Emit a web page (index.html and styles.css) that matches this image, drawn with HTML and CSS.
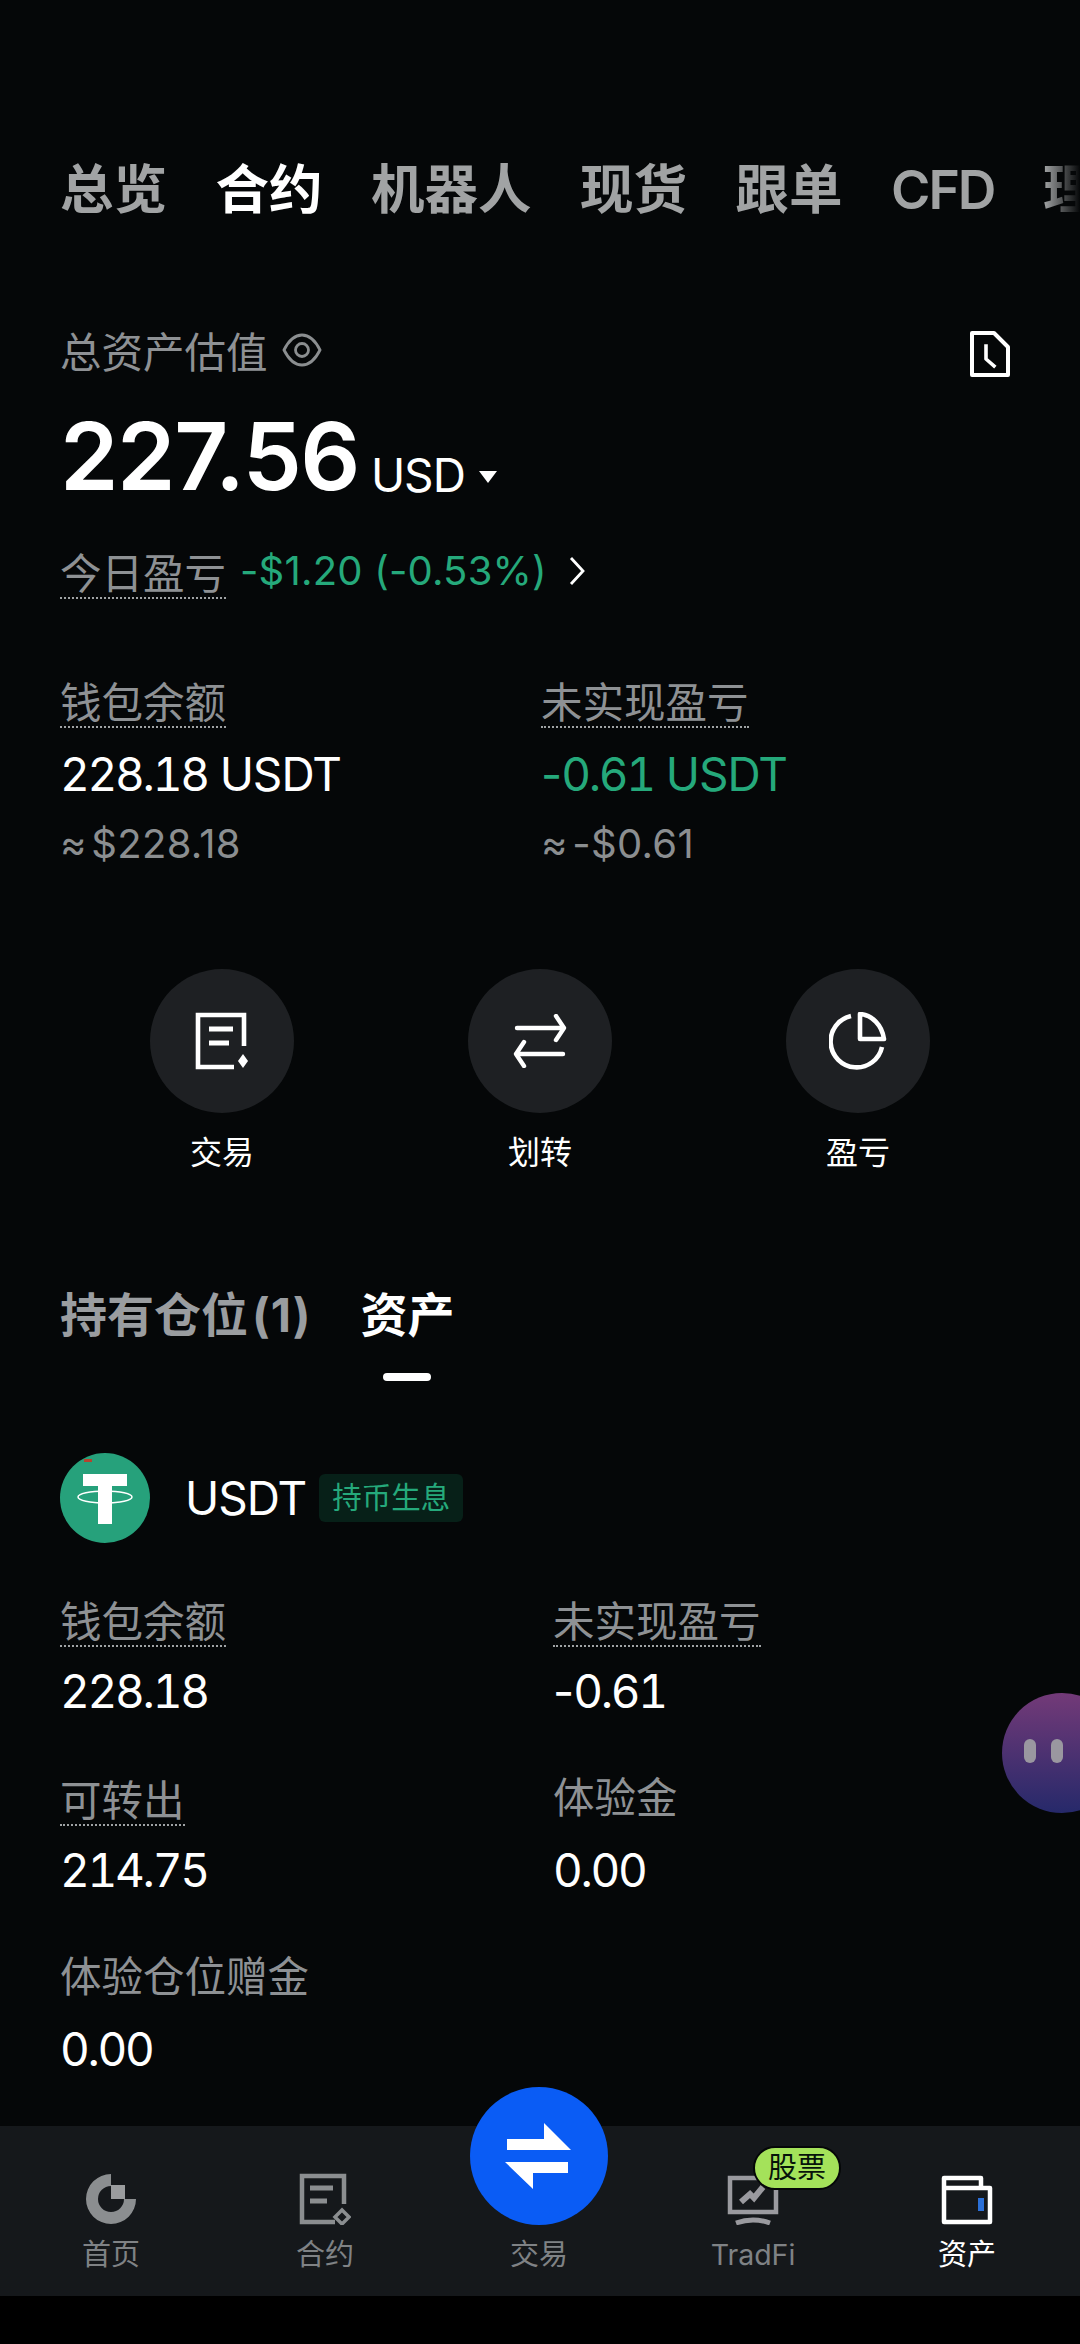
FILE: index.html
```html
<!DOCTYPE html>
<html lang="zh-CN">
<head>
    <meta charset="UTF-8">
    <meta name="viewport" content="width=device-width, initial-scale=1.0">
    <title>资产</title>
    <link rel="stylesheet" href="styles.css">
</head>
<body>
    <div class="page">
        <main class="content">
            <div class="top-tabs">
                <span>总览</span>
                <span class="active">合约</span>
                <span>机器人</span>
                <span>现货</span>
                <span>跟单</span>
                <span class="latin-tab">CFD</span>
                <span>理财</span>
            </div>

            <div class="total-head">
                <span>总资产估值</span>
                <svg class="eye" viewBox="0 0 40 40" fill="none" stroke="#8b8e90" stroke-width="2.8">
                    <path d="M2 20C7 10 13 5 20 5s13 5 18 15c-5 10-11 15-18 15S7 30 2 20z"/>
                    <circle cx="20" cy="20" r="6.500"/>
                </svg>
                <svg class="history" viewBox="0 0 40 46" fill="none" stroke="#fff" stroke-width="4" stroke-linejoin="round">
                    <path d="M2 2h22l14 14v28H2z"/>
                    <path d="M16 15v13l8 7" stroke-linecap="square" stroke-width="3.6"/>
                </svg>
            </div>
            <div class="total-value">
                <span class="big">227.56</span>
                <span class="unit">USD</span>
                <span class="caret"></span>
            </div>
            <div class="today">
                <span class="hint">今日盈亏</span>
                <span class="green">-$1.20 (-0.53%)</span>
                <svg class="chevron" viewBox="0 0 18 30" fill="none" stroke="#fff" stroke-width="2.8">
                    <path d="M3 2l12 13L3 28"/>
                </svg>
            </div>

            <div class="balance">
                <div>
                    <div class="hint">钱包余额</div>
                    <div class="value"><span class="num">228.18</span> USDT</div>
                    <div class="approx">≈ $228.18</div>
                </div>
                <div>
                    <div class="hint">未实现盈亏</div>
                    <div class="value green">-<span class="num">0.61</span> USDT</div>
                    <div class="approx">≈ -$0.61</div>
                </div>
            </div>

            <div class="actions">
                <div class="action">
                    <div class="circle">
                        <svg width="54" height="58" viewBox="0 0 54 58" fill="none" stroke="#fff" stroke-width="4.600">
                            <path d="M49 34V3H3v52h36"/>
                            <path d="M14 17h24M14 31h20" stroke-width="5"/>
                            <path d="M48 42l5 7-5 7-5-7z" fill="#fff" stroke="none"/>
                        </svg>
                    </div>
                    <span>交易</span>
                </div>
                <div class="action">
                    <div class="circle">
                        <svg width="56" height="54" viewBox="0 0 56 54" fill="none" stroke="#fff" stroke-width="4.400" stroke-linecap="round" stroke-linejoin="round">
                            <path d="M5 14h47M44 2l8 12-8 12"/>
                            <path d="M51 40H4M12 28L4 40l8 12"/>
                        </svg>
                    </div>
                    <span>划转</span>
                </div>
                <div class="action">
                    <div class="circle">
                        <svg width="58" height="58" viewBox="0 0 58 58" fill="none" stroke="#fff" stroke-width="4.600">
                            <path d="M22 4A26 26 0 1 0 53 35"/>
                            <path d="M31 2c12 1 22 11 24 25H31z" stroke-linejoin="round"/>
                        </svg>
                    </div>
                    <span>盈亏</span>
                </div>
            </div>

            <div class="sub-tabs">
                <span>持有仓位<span class="count">(1)</span></span>
                <span class="active">资产</span>
            </div>

            <div class="coin">
                <svg class="coin-logo" viewBox="0 0 90 90">
                    <circle cx="45" cy="45" r="45" fill="#26a17b"/>
                    <path d="M23 21h44v12H52v38H38V33H23z" fill="#fff"/>
                    <ellipse cx="45" cy="44" rx="27" ry="6" fill="none" stroke="#fff" stroke-width="1.500"/>
                    <path d="M24 6h8v3h-8z" fill="#b5432f"/>
                </svg>
                <span class="coin-name">USDT</span>
                <span class="coin-tag">持币生息</span>
            </div>

            <div class="coin-grid">
                <div>
                    <div class="hint">钱包余额</div>
                    <div class="value"><span class="num">228.18</span></div>
                </div>
                <div>
                    <div class="hint">未实现盈亏</div>
                    <div class="value">-<span class="num">0.61</span></div>
                </div>
                <div>
                    <div class="hint">可转出</div>
                    <div class="value"><span class="num">214.75</span></div>
                </div>
                <div>
                    <div class="label">体验金</div>
                    <div class="value"><span class="num">0.00</span></div>
                </div>
                <div>
                    <div class="label">体验仓位赠金</div>
                    <div class="value"><span class="num">0.00</span></div>
                </div>
            </div>
        </main>

        <nav class="bottom-nav">
            <div class="nav-item">
                <svg viewBox="0 0 50 52" width="50" height="52">
                    <path d="M25 1v12a13 13 0 1 0 13 13h12A25 25 0 1 1 25 1z" fill="#8b8e90"/>
                    <path d="M25 12h14v14H25z" fill="#9a9c9e"/>
                </svg>
                <span>首页</span>
            </div>
            <div class="nav-item">
                <svg viewBox="0 0 52 52" width="52" height="52" fill="none" stroke="#8b8e90" stroke-width="4.500">
                    <path d="M45 31V3H3v46h33"/>
                    <path d="M11 15h23M11 28h17" stroke-width="5"/>
                    <path d="M43 37l7 7-7 7-7-7z" stroke-width="3.500"/>
                </svg>
                <span>合约</span>
            </div>
            <div class="nav-item">
                <div class="trade-btn">
                    <svg width="72" height="70" viewBox="0 0 72 70" fill="#fff">
                        <path d="M4 18h37V2l27 27H4z"/>
                        <path d="M2 41h63v11H30v16z"/>
                    </svg>
                </div>
                <span>交易</span>
            </div>
            <div class="nav-item">
                <svg viewBox="0 0 52 50" width="52" height="50" fill="none" stroke="#9a9a9f" stroke-width="4.500">
                    <path d="M3 3h46v34H3z"/>
                    <path d="M14 27l9-8 4 4 9-11" stroke-width="6"/>
                    <path d="M9 48c11-4 23-4 34 0" stroke-width="5"/>
                </svg>
                <span class="latin">TradFi</span>
                <span class="stock-badge">股票</span>
            </div>
            <div class="nav-item current">
                <svg viewBox="0 0 52 50" width="52" height="50" fill="none" stroke="#fff" stroke-width="4.500">
                    <path d="M3 13V3h37v10M3 13h46v34H3z" stroke-linejoin="round"/>
                    <path d="M37 23h6v13h-6z" fill="#2b70d8" stroke="none"/>
                </svg>
                <span>资产</span>
            </div>
        </nav>
        <div class="safe-area"></div>

        <div class="float-bot">
            <i></i><i></i>
        </div>
    </div>
</body>
</html>
```

FILE: styles.css
```css
* {
    box-sizing: border-box;
}
body {
    margin: 0;
    background-color: #050708;
    color: #fff;
    font-family: Inter, "Noto Sans CJK SC", sans-serif;
}
.page {
    position: relative;
    width: 1080px;
    height: 2344px;
    display: flex;
    flex-direction: column;
    overflow: hidden;
}
.content {
    flex: 1;
    padding-left: 60px;
    min-height: 0;
}
.green {
    color: #25a97b;
}

/* top tabs */
.top-tabs {
    position: relative;
    display: flex;
    gap: 48.5px;
    margin-top: 152px;
    height: 76px;
    font-size: 53.5px;
    line-height: 76px;
    font-weight: 600;
    color: #a1a3a4;
    white-space: nowrap;
    overflow: hidden;
}
.top-tabs .active {
    color: #fff;
}
.top-tabs .latin-tab {
    letter-spacing: -2px;
}
.top-tabs::after {
    content: "";
    position: absolute;
    right: 0;
    top: 0;
    bottom: 0;
    width: 36px;
    background: linear-gradient(to right, rgba(5, 7, 8, 0), #050708);
}

/* total */
.total-head {
    display: flex;
    align-items: center;
    margin-top: 98px;
    height: 48px;
    padding-right: 70px;
    font-size: 41.5px;
    color: #8e9194;
}
.eye {
    width: 40px;
    height: 40px;
    margin-left: 14px;
}
.history {
    width: 40px;
    height: 46px;
    margin-left: auto;
    margin-top: 8px;
}
.total-value {
    display: flex;
    align-items: baseline;
    margin-top: 32px;
    height: 100px;
    line-height: 100px;
}
.big {
    font-size: 94px;
    font-weight: 600;
    letter-spacing: -1.5px;
}
.unit {
    margin-left: 12px;
    font-size: 46px;
    letter-spacing: -1px;
    transform: translateY(2px);
}
.caret {
    width: 0;
    height: 0;
    margin-left: 14px;
    border-left: 9px solid transparent;
    border-right: 9px solid transparent;
    border-top: 12px solid #fff;
    transform: translateY(-7px);
}
.today {
    display: flex;
    align-items: flex-start;
    margin-top: 45px;
    line-height: 48px;
}
.today .green {
    margin: -4px 0 0 14px;
    font-size: 40px;
    letter-spacing: 0.2px;
}
.chevron {
    width: 18px;
    height: 30px;
    margin: 5px 0 0 21px;
}

/* labels */
.hint, .label {
    font-size: 41.5px;
    color: #8e9194;
    white-space: nowrap;
}
.hint {
    width: fit-content;
    line-height: 46px;
    border-bottom: 2px dotted #a0a3a5;
}
.label {
    line-height: 40px;
    padding-bottom: 8px;
}
.value {
    font-size: 46px;
    line-height: 56px;
    letter-spacing: -1px;
}
.num {
    font-variant-numeric: tabular-nums;
    letter-spacing: -2.3px;
}
.approx {
    margin-top: 18px;
    font-size: 40px;
    line-height: 48px;
    color: #8b8e90;
    letter-spacing: 0.3px;
    word-spacing: -7px;
}

/* balance */
.balance {
    display: grid;
    grid-template-columns: 481px 1fr;
    margin-top: 81px;
}
.balance .value {
    margin-top: 18px;
}

/* round actions */
.actions {
    display: grid;
    grid-template-columns: repeat(3, 318px);
    margin: 101px 0 0 3px;
}
.action {
    display: flex;
    flex-direction: column;
    align-items: center;
    font-size: 32px;
    line-height: 40px;
}
.circle {
    width: 144px;
    height: 144px;
    border-radius: 50%;
    background-color: #1e2023;
    display: flex;
    align-items: center;
    justify-content: center;
    margin-bottom: 20px;
}

/* position tabs */
.sub-tabs {
    display: flex;
    gap: 49px;
    margin-top: 112px;
    font-size: 47px;
    line-height: 60px;
    font-weight: 700;
    color: #9a9da0;
}
.sub-tabs .count {
    margin-left: 4px;
    letter-spacing: 1px;
}
.sub-tabs .active {
    position: relative;
    color: #fff;
}
.sub-tabs .active::after {
    content: "";
    position: absolute;
    left: 22px;
    bottom: -36px;
    width: 48px;
    height: 8px;
    border-radius: 4px;
    background-color: #fff;
}

/* coin */
.coin {
    display: flex;
    align-items: center;
    margin-top: 108px;
    height: 90px;
}
.coin-logo {
    width: 90px;
    height: 90px;
}
.coin-name {
    margin-left: 35px;
    font-size: 46px;
    letter-spacing: -1px;
}
.coin-tag {
    margin-left: 13px;
    padding: 0 13px;
    height: 48px;
    line-height: 46px;
    border-radius: 6px;
    font-size: 29.5px;
    color: #25a97b;
    background-color: #072018;
}
.coin-grid {
    display: grid;
    grid-template-columns: 493px 1fr;
    row-gap: 59px;
    margin-top: 56px;
}
.coin-grid .value {
    margin-top: 16px;
}

/* bottom nav */
.bottom-nav {
    display: grid;
    grid-template-columns: repeat(5, 1fr);
    height: 170px;
    padding: 0 6px 0 4px;
    background-color: #15181b;
}
.nav-item {
    position: relative;
    display: flex;
    flex-direction: column;
    align-items: center;
    justify-content: flex-end;
    padding-bottom: 21px;
    font-size: 29px;
    line-height: 40px;
    color: #7f8285;
}
.nav-item svg {
    margin-bottom: 10px;
}
.nav-item.current {
    color: #fff;
}
.latin {
    font-size: 28.5px;
}
.trade-btn {
    position: absolute;
    left: 50%;
    top: -39px;
    width: 138px;
    height: 138px;
    margin-left: -69px;
    border-radius: 50%;
    background-color: #0a5cf5;
    display: flex;
    align-items: center;
    justify-content: center;
}
.trade-btn svg {
    margin: 0;
}
.stock-badge {
    position: absolute;
    left: 107px;
    top: 20px;
    width: 88px;
    height: 44px;
    border-radius: 22px;
    border: 2px solid #050708;
    background-color: #a4e25a;
    color: #07130a;
    font-size: 29px;
    line-height: 40px;
    text-align: center;
}
.safe-area {
    height: 48px;
    background-color: #000;
}

/* floating helper */
.float-bot {
    position: absolute;
    right: -42px;
    top: 1693px;
    width: 120px;
    height: 120px;
    border-radius: 50%;
    background: linear-gradient(#733a78, #26296a);
    display: flex;
    gap: 15px;
    padding: 46px 0 0 22px;
}
.float-bot i {
    width: 12px;
    height: 24px;
    border-radius: 6px;
    background-color: #9a97a0;
}
```
